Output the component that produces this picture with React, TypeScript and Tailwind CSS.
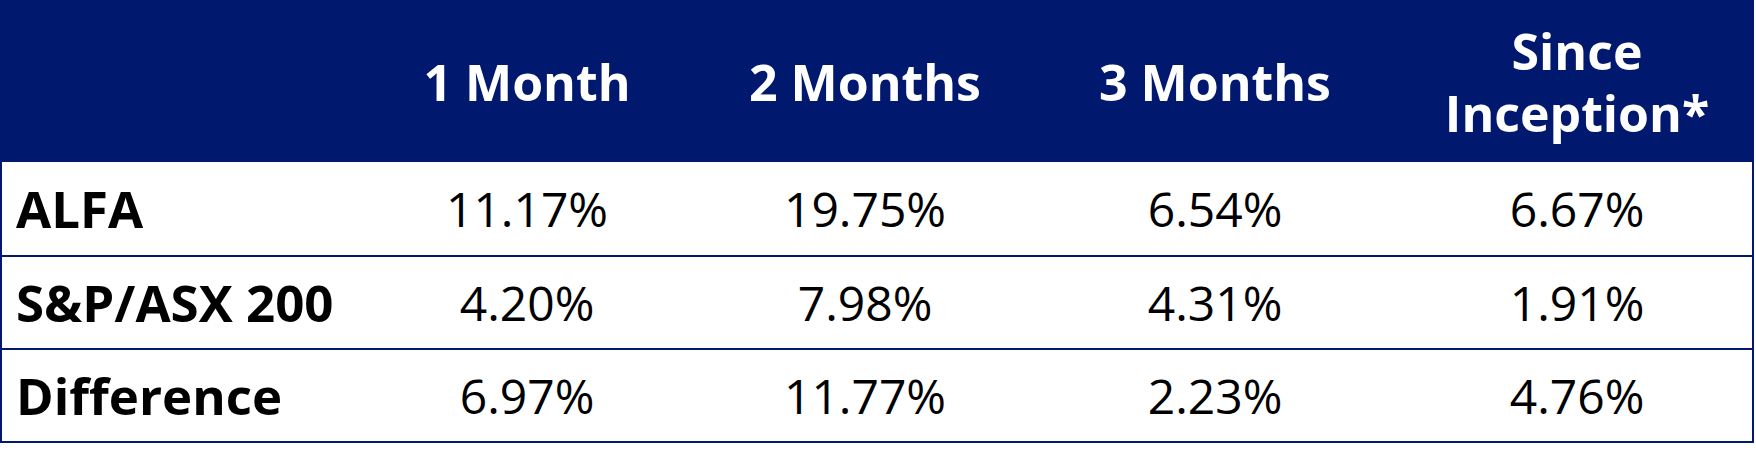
const columns = ["1 Month", "2 Months", "3 Months", "Since Inception*"];

const rows = [
  { label: "ALFA", values: ["11.17%", "19.75%", "6.54%", "6.67%"] },
  { label: "S&P/ASX 200", values: ["4.20%", "7.98%", "4.31%", "1.91%"] },
  { label: "Difference", values: ["6.97%", "11.77%", "2.23%", "4.76%"] },
];

export default function App() {
  return (
    <div className="min-h-screen bg-white" style={{ fontFamily: '"Open Sans", "Noto Sans", sans-serif' }}>
      <div className="w-[1754px] border-2 border-[#00196e]">
        <div className="grid h-[160px] grid-cols-[350px_350px_326px_374px_350px] items-center bg-[#00196e] text-center text-[50px] font-bold leading-[62px] text-white">
          <div />
          {columns.map((c) => (
            <div key={c} className={c.startsWith("Since") ? "mx-auto w-[270px]" : ""}>
              {c}
            </div>
          ))}
        </div>
        {rows.map((r, i) => (
          <div
            key={r.label}
            className={`grid h-[93px] grid-cols-[350px_350px_326px_374px_350px] items-center text-[48px] text-black ${
              i > 0 ? "border-t-2 border-[#00196e]" : ""
            }`}
          >
            <div className="pl-[14px] text-[51px] font-bold">{r.label}</div>
            {r.values.map((v, j) => (
              <div key={j} className="text-center">
                {v}
              </div>
            ))}
          </div>
        ))}
      </div>
    </div>
  );
}
